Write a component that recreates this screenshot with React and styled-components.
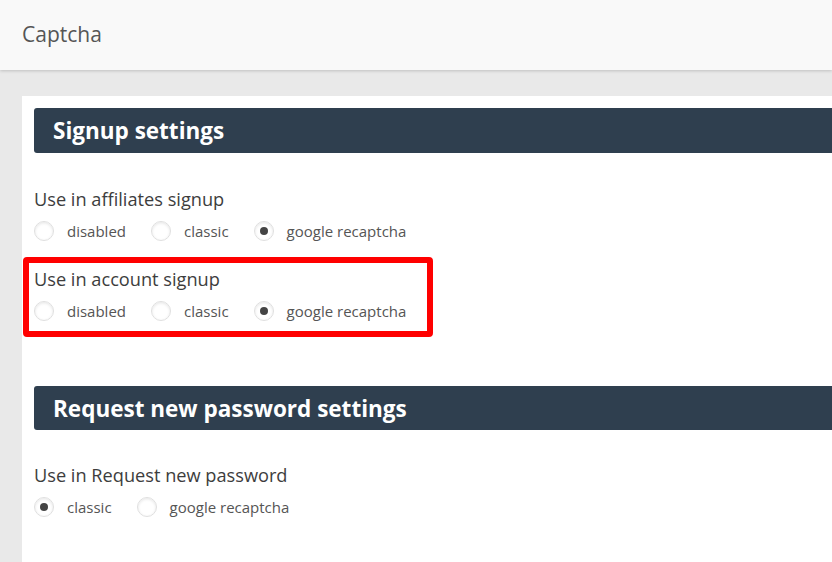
import React from "react";
import styled, { createGlobalStyle } from "styled-components";

const Global = createGlobalStyle`
  html, body { margin: 0; padding: 0; }
  body {
    background: #e9e9e9;
    font-family: "Open Sans", "Noto Sans", Arial, sans-serif;
    overflow: hidden;
  }
`;

const Page = styled.div`
  width: 832px;
  height: 562px;
  background: #e9e9e9;
  display: flex;
  flex-direction: column;
`;

const TopBar = styled.header`
  height: 70px;
  flex: none;
  background: #f9f9f9;
  box-shadow: 0 1px 3px rgba(0, 0, 0, 0.18);
  display: flex;
  align-items: center;
  padding-left: 22px;
  position: relative;
  z-index: 1;
`;

const PageTitle = styled.h1`
  margin: 0 0 2px;
  font-size: 21px;
  font-weight: 400;
  color: #555;
  line-height: 1;
`;

const Body = styled.main`
  flex: 1;
  padding: 26px 0 0 22px;
  display: flex;
`;

const Card = styled.section`
  flex: 1;
  background: #fff;
  padding: 12px 0 0 12px;
`;

const SectionHeader = styled.h2`
  margin: 0;
  height: ${(p) => p.$h}px;
  background: #2f3f4f;
  border-radius: 3px 0 0 3px;
  color: #fff;
  font-size: 22.5px;
  font-weight: 700;
  display: flex;
  align-items: center;
  padding: 2px 0 0 19px;
  box-sizing: border-box;
  line-height: 1;
`;

const Fields = styled.div`
  display: flex;
  flex-direction: column;
  gap: 24px;
  padding-top: ${(p) => p.$top}px;
  padding-bottom: ${(p) => p.$bottom}px;
`;

const Field = styled.div`
  position: relative;
  display: flex;
  flex-direction: column;
  gap: 8px;
`;

const Highlight = styled.div`
  position: absolute;
  left: -11px;
  top: -10px;
  width: 410px;
  height: 80px;
  box-sizing: border-box;
  border: 6px solid #ff0000;
  border-radius: 4px;
  pointer-events: none;
`;

const Label = styled.div`
  font-size: 18.2px;
  line-height: 24px;
  color: #3d3d3d;
`;

const Options = styled.div`
  display: flex;
  align-items: center;
  gap: 25px;
  height: 24px;
`;

const Option = styled.label`
  display: flex;
  align-items: center;
  gap: 13px;
  font-size: 15px;
  color: #555;
  line-height: 24px;
`;

const Radio = styled.span`
  width: 20px;
  height: 20px;
  box-sizing: border-box;
  border-radius: 50%;
  border: 1px solid #e0e0e0;
  background: #fff;
  box-shadow: inset 0 1px 3px rgba(0, 0, 0, 0.1);
  display: flex;
  align-items: center;
  justify-content: center;
  &::after {
    content: "";
    width: 8px;
    height: 8px;
    border-radius: 50%;
    background: ${(p) => (p.$checked ? "#444" : "transparent")};
  }
`;

const RadioGroup = ({ options, value }) => (
  <Options>
    {options.map((o) => (
      <Option key={o}>
        <Radio $checked={o === value} />
        {o}
      </Option>
    ))}
  </Options>
);

export default function App() {
  const three = ["disabled", "classic", "google recaptcha"];
  return (
    <Page>
      <Global />
      <TopBar>
        <PageTitle>Captcha</PageTitle>
      </TopBar>
      <Body>
        <Card>
          <SectionHeader $h={45}>Signup settings</SectionHeader>
          <Fields $top={34} $bottom={63}>
            <Field>
              <Label>Use in affiliates signup</Label>
              <RadioGroup options={three} value="google recaptcha" />
            </Field>
            <Field>
              <Highlight />
              <Label>Use in account signup</Label>
              <RadioGroup options={three} value="google recaptcha" />
            </Field>
          </Fields>
          <SectionHeader $h={44}>Request new password settings</SectionHeader>
          <Fields $top={33} $bottom={0}>
            <Field>
              <Label>Use in Request new password</Label>
              <RadioGroup options={["classic", "google recaptcha"]} value="classic" />
            </Field>
          </Fields>
        </Card>
      </Body>
    </Page>
  );
}
